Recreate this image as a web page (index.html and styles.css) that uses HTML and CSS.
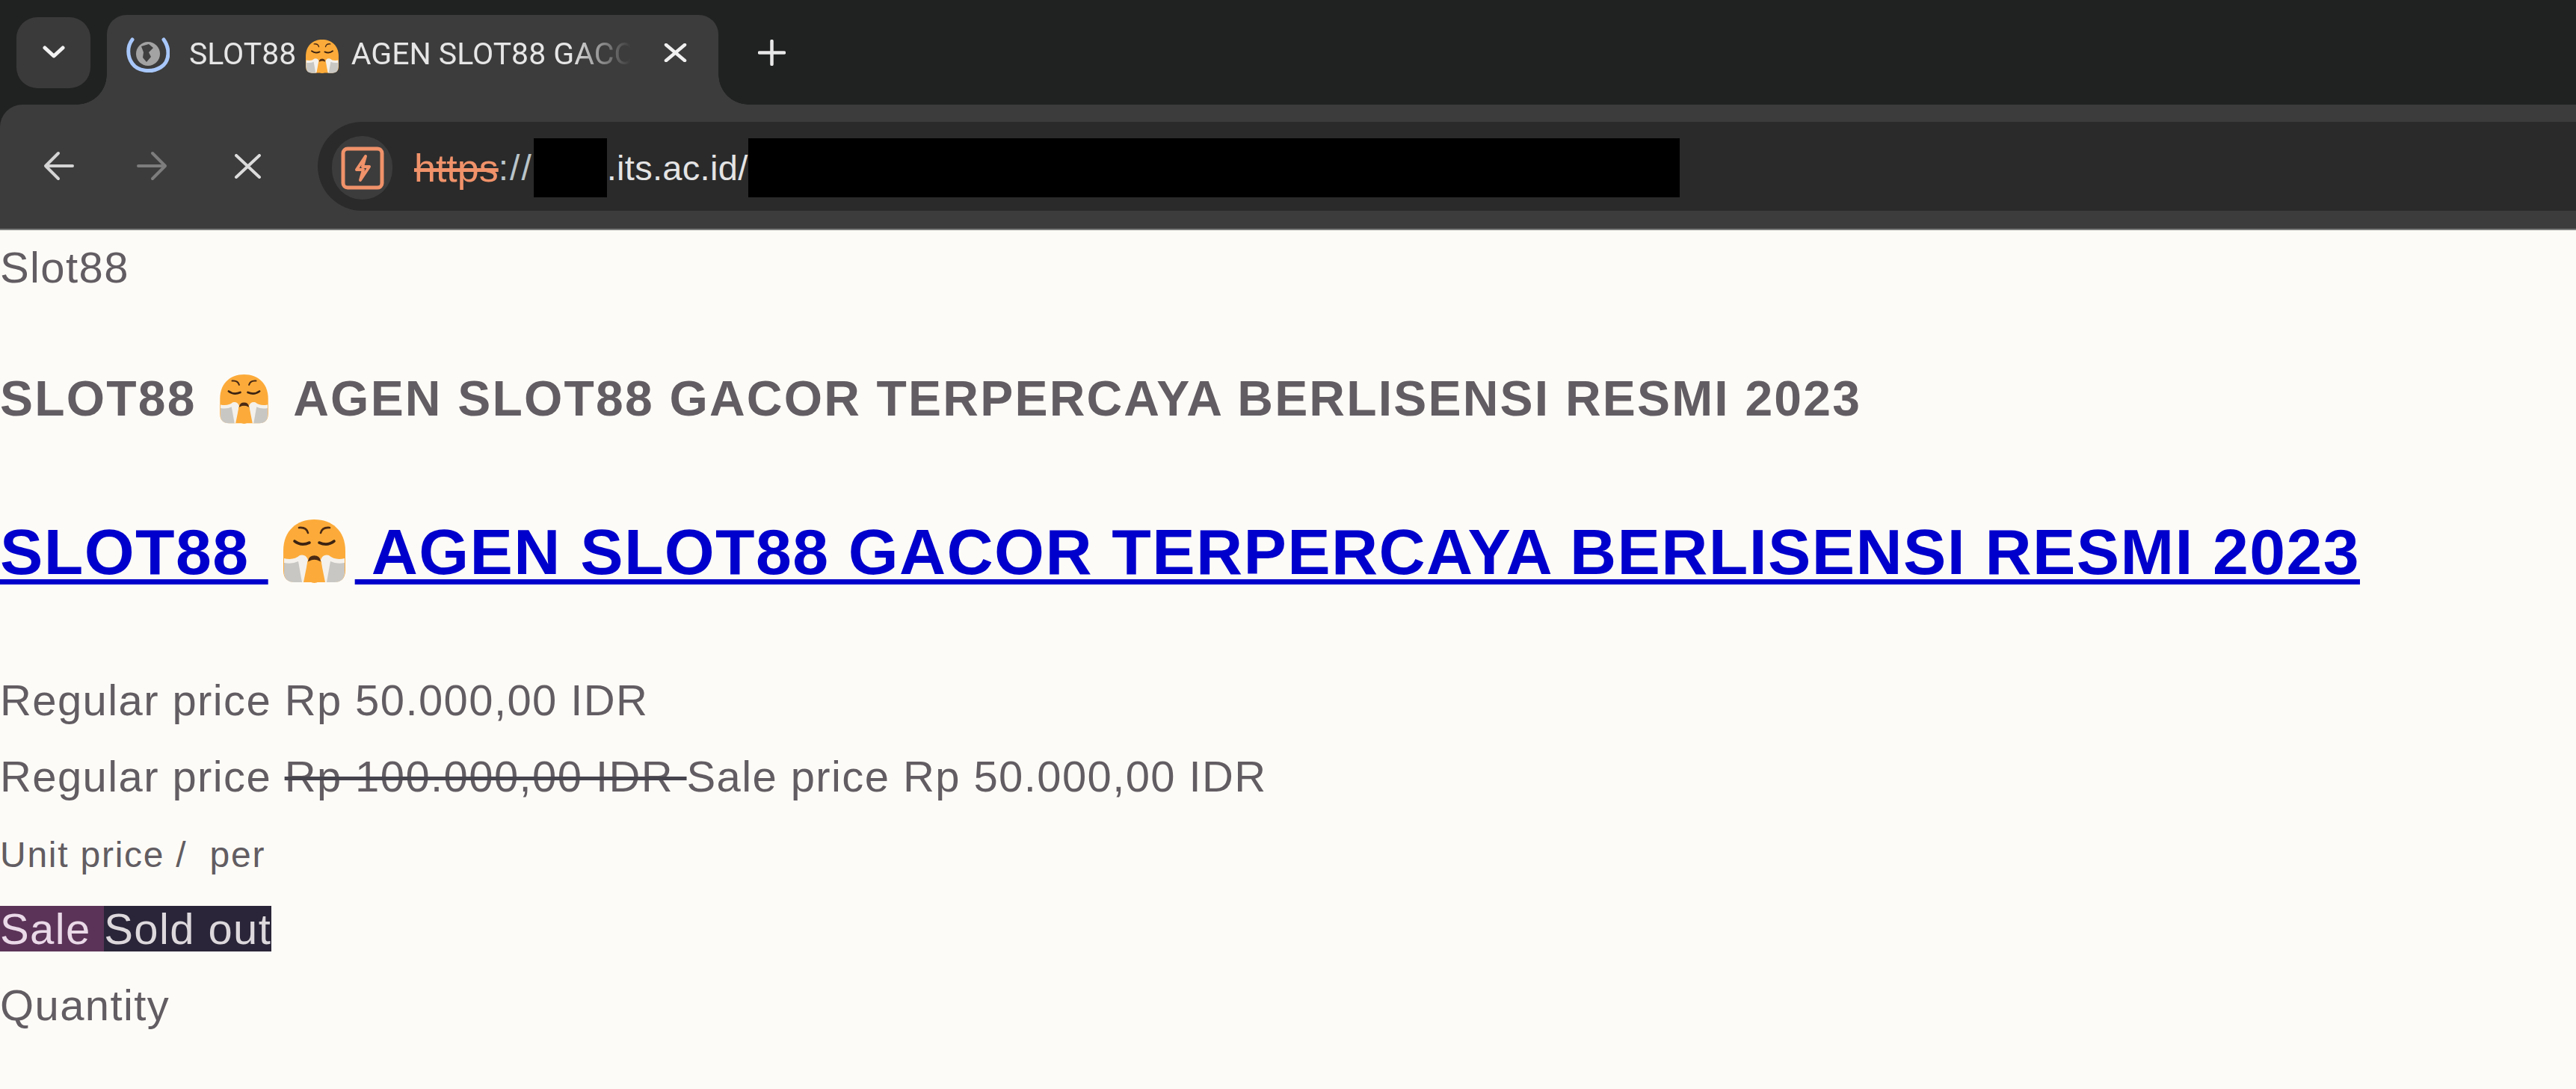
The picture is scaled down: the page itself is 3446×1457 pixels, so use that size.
FILE: index.html
```html
<!DOCTYPE html>
<html lang="id">
<head>
<meta charset="utf-8">
<title>SLOT88 AGEN SLOT88 GACOR</title>
<link rel="stylesheet" href="styles.css">
</head>
<body>
<svg class="defs" width="0" height="0" aria-hidden="true">
  <symbol id="huff" viewBox="0 0 83 85">
    <path d="M0 42C0 15 18 0 41.5 0S83 15 83 42V68Q83 84 67 84H16Q0 84 0 68Z" fill="#fcab3a"/>
    <path d="M1 52Q14 55 22 48Q30 46 33 54L27 84H16Q1 84 1 68Z" fill="#f4f1ec"/>
    <path d="M82 52Q69 55 61 48Q53 46 50 54L56 84H67Q82 84 82 68Z" fill="#f4f1ec"/>
    <path d="M1 58Q12 60 20 56L25 84H15Q1 84 1 70Z" fill="#c9c7c3"/>
    <path d="M82 58Q71 60 63 56L58 84H68Q82 84 82 70Z" fill="#c9c7c3"/>
    <path d="M32 56H51L52 78Q48 85 41.5 85T31 78Z" fill="#fcab3a"/>
    <path d="M34 55Q35 49 41.5 49T49 55Q41.5 51 34 55Z" fill="#4a2a14" stroke="#4a2a14" stroke-width="1.5"/>
    <path d="M21 11Q31 10 33 18M62 11Q52 10 50 18" fill="none" stroke="#4a2a14" stroke-width="2.6" stroke-linecap="round"/>
    <path d="M15 29Q24 36 35 31M68 29Q59 36 48 31" fill="none" stroke="#3b2312" stroke-width="3.6" stroke-linecap="round"/>
  </symbol>
</svg>

<header class="browser">
  <div class="tabstrip">
    <button class="tabsearch" type="button" aria-label="Search tabs">
      <svg class="ico-chevron" viewBox="0 0 30 17"><path d="M3 3L15 14L27 3" fill="none" stroke="#f2f2f2" stroke-width="5" stroke-linecap="round" stroke-linejoin="round"/></svg>
    </button>
    <div class="tab">
      <svg class="ico-favicon" viewBox="0 0 58 50">
        <path d="M8 5C1 14 1 27 8 37S33 50 46 42 58 16 50 5" fill="none" stroke="#a8c7fa" stroke-width="5" stroke-linecap="round"/>
        <circle cx="29" cy="24" r="16" fill="#a3a3a3"/>
        <path d="M20 14L30 11L36 16L30 22L33 28L27 35L22 29L23 22Z" fill="#3f3f3f"/>
      </svg>
      <span class="tab-title">SLOT88 <svg class="emoji-tab" aria-hidden="true"><use href="#huff"/></svg> AGEN SLOT88 GACOR TERPERCAYA</span>
      <svg class="ico-tabclose" viewBox="0 0 31 25"><path d="M3 2L28 23M28 2L3 23" fill="none" stroke="#f0f0f0" stroke-width="4.500" stroke-linecap="round"/></svg>
    </div>
    <svg class="ico-plus" viewBox="0 0 37 35"><path d="M18.500 2V33M2 17.500H35" fill="none" stroke="#e8e8e8" stroke-width="4.500" stroke-linecap="round"/></svg>
  </div>
  <div class="toolbar">
    <div class="nav">
      <svg class="ico-arrow" viewBox="0 0 42 40"><path d="M40 20H5M21 3L4 20L21 37" fill="none" stroke="#d4d4d4" stroke-width="4" stroke-linecap="round" stroke-linejoin="round"/></svg>
      <svg class="ico-arrow" viewBox="0 0 42 40"><path d="M2 20H37M21 3L38 20L21 37" fill="none" stroke="#7d7d7d" stroke-width="4" stroke-linecap="round" stroke-linejoin="round"/></svg>
      <svg class="ico-stop" viewBox="0 0 37 33"><path d="M3 2L34 31M34 2L3 31" fill="none" stroke="#dcdcdc" stroke-width="4" stroke-linecap="round"/></svg>
    </div>
    <div class="omnibox">
      <div class="site-chip">
        <svg class="ico-warn" viewBox="0 0 58 58">
          <rect x="3" y="3" width="52" height="52" rx="6" fill="none" stroke="#f0926a" stroke-width="5"/>
          <path d="M33 13L21 31H30L26 45L38 27H29Z" fill="none" stroke="#f0926a" stroke-width="4" stroke-linejoin="round"/>
        </svg>
      </div>
      <div class="url"><span class="scheme">https</span><span class="sep">://</span><span class="redact redact-host"></span><span class="host">.its.ac.id/</span><span class="redact redact-path"></span></div>
    </div>
  </div>
</header>

<main class="page">
  <p class="line vendor">Slot88</p>
  <h2 class="subtitle">SLOT88 <svg class="emoji emoji-sub" aria-hidden="true"><use href="#huff"/></svg> AGEN SLOT88 GACOR TERPERCAYA BERLISENSI RESMI 2023</h2>
  <h1 class="title"><a href="#">SLOT88 <svg class="emoji emoji-main" aria-hidden="true"><use href="#huff"/></svg> AGEN SLOT88 GACOR TERPERCAYA BERLISENSI RESMI 2023</a></h1>
  <p class="line price">Regular price Rp 50.000,00 IDR</p>
  <p class="line">Regular price <s class="was">Rp 100.000,00 IDR </s>Sale price Rp 50.000,00 IDR</p>
  <p class="line unit">Unit price /&nbsp; per</p>
  <p class="line"><span class="badge badge-sale">Sale </span><span class="badge badge-sold">Sold out</span></p>
  <p class="line">Quantity</p>
</main>
</body>
</html>
```
FILE: styles.css
```css
* { box-sizing: border-box; }
html, body { margin: 0; padding: 0; }
body {
  background: #fdfbf7;
  color: #625d62;
  font-family: "Liberation Sans", Arial, sans-serif;
  overflow: hidden;
}
.defs { display: block; height: 0; }

/* browser chrome */
.browser { background: #202221; }
.tabstrip {
  display: flex;
  height: 140px;
  padding-left: 22px;
}
.tabsearch {
  width: 99px;
  height: 95px;
  margin-top: 23px;
  border: 0;
  border-radius: 28px;
  background: #3a3a3a;
  display: flex;
  align-items: center;
  justify-content: center;
  padding: 0 0 2px;
}
.ico-chevron { width: 30px; height: 17px; }
.tab {
  position: relative;
  width: 818px;
  height: 120px;
  margin: 20px 0 0 22px;
  padding: 28px 42px 0 26px;
  background: #3c3c3c;
  border-radius: 26px 26px 0 0;
  display: flex;
  align-items: flex-start;
  color: #e6e6e6;
  font-family: Roboto, "Liberation Sans", sans-serif;
  font-size: 41px;
}
.tab::before, .tab::after {
  content: "";
  position: absolute;
  bottom: 0;
  width: 40px;
  height: 40px;
}
.tab::before {
  left: -40px;
  background: radial-gradient(circle at 0 0, transparent 39.500px, #3c3c3c 40px);
}
.tab::after {
  right: -40px;
  background: radial-gradient(circle at 100% 0, transparent 39.500px, #3c3c3c 40px);
}
.ico-favicon { width: 58px; height: 50px; flex: none; }
.tab-title {
  flex: 1;
  min-width: 0;
  margin-left: 26px;
  margin-top: 1px;
  line-height: 46px;
  white-space: nowrap;
  overflow: hidden;
  -webkit-mask-image: linear-gradient(to right, #000 84%, transparent 97%);
  mask-image: linear-gradient(to right, #000 84%, transparent 97%);
}
.emoji-tab { width: 44px; height: 45px; vertical-align: -12px; margin: 0 7px 0 2px; }
.ico-tabclose { width: 31px; height: 25px; flex: none; margin: 10px 0 0 26px; }
.ico-plus { width: 37px; height: 35px; margin: 53px 0 0 53px; }

.toolbar {
  height: 168px;
  background: #3c3c3c;
  border-top-left-radius: 30px;
  border-bottom: 2px solid #7c7c7c;
  display: flex;
  padding-left: 57px;
}
.nav {
  width: 368px;
  display: flex;
  align-items: center;
  gap: 84px;
  padding-bottom: 2px;
  flex: none;
}
.ico-arrow { width: 42px; height: 40px; flex: none; }
.ico-stop { width: 37px; height: 33px; flex: none; margin-left: 4px; }
.omnibox {
  flex: 1;
  height: 119px;
  margin-top: 23px;
  background: #2a2a2a;
  border-radius: 60px 0 0 60px;
  display: flex;
  align-items: center;
  padding-left: 19px;
}
.site-chip {
  width: 81px;
  height: 85px;
  margin-top: 4px;
  border-radius: 42px;
  background: #3c3c3c;
  display: flex;
  align-items: center;
  justify-content: center;
  flex: none;
}
.ico-warn { width: 58px; height: 58px; }
.url {
  display: flex;
  align-items: center;
  margin: 4px 0 0 29px;
  height: 79px;
  font-family: "Liberation Sans", sans-serif;
  font-size: 48px;
  color: #e4e4e4;
  white-space: nowrap;
}
.scheme { color: #f0926a; text-decoration: line-through; font-size: 52px; }
.sep { color: #b9c4c9; letter-spacing: 2px; }
.host { font-size: 47px; letter-spacing: 0.3px; }
.redact { display: block; height: 79px; background: #000; }
.redact-host { width: 98px; margin-left: 1px; }
.redact-path { width: 1246px; }

/* product page */
.page { margin-top: -1px; }
.line, .subtitle, .title { margin: 0; }
.line {
  font-size: 58px;
  line-height: 102px;
  letter-spacing: 1.4px;
}
.subtitle {
  margin-top: 73px;
  font-size: 66px;
  line-height: 102px;
  letter-spacing: 2.2px;
}
.title {
  margin-top: 99px;
  font-size: 86px;
  line-height: 110px;
  letter-spacing: 1.4px;
}
.title a {
  color: #0000cc;
  text-decoration-thickness: 7px;
  text-underline-offset: 7px;
}
.emoji { display: inline-block; }
.emoji-sub { width: 67px; height: 66px; vertical-align: -11px; margin: 0 14px 0 10px; }
.emoji-main { width: 83px; height: 85px; vertical-align: -12px; margin: 0 13px 0 20px; }
.price { margin-top: 93px; }
.was { text-decoration-color: #45434c; text-decoration-thickness: 5px; }
.unit { font-size: 48px; letter-spacing: 1.75px; margin: 3px 0 -3px; }
.badge { display: inline-block; line-height: 61px; white-space: pre; }
.badge-sale { background: #5b3358; color: #ead9e8; }
.badge-sold { background: #2a2538; color: #dcd8dc; }
```
